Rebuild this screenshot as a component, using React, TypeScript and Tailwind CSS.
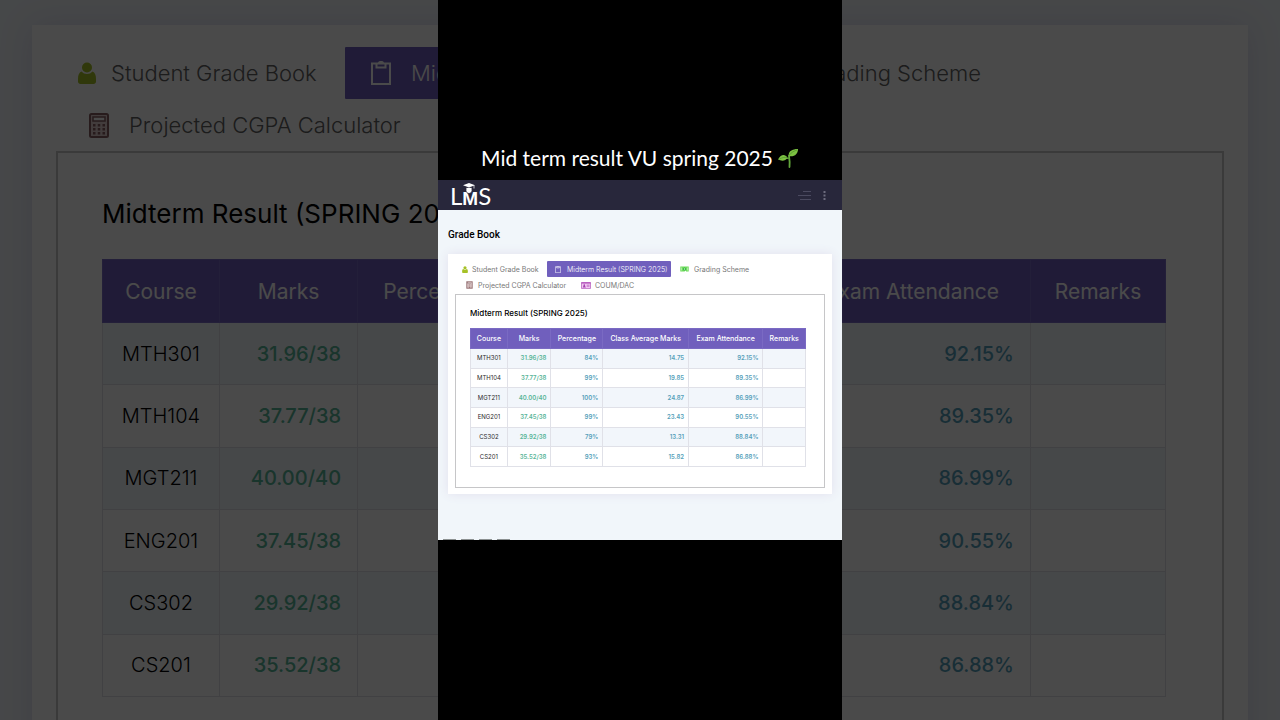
import type { ReactNode } from "react";
import { clsx } from "clsx";

type Size = "sm" | "lg";

type Row = {
  course: string;
  marks: string;
  percentage: string;
  average: string;
  attendance: string;
};

const rows: Row[] = [
  { course: "MTH301", marks: "31.96/38", percentage: "84%", average: "14.75", attendance: "92.15%" },
  { course: "MTH104", marks: "37.77/38", percentage: "99%", average: "19.85", attendance: "89.35%" },
  { course: "MGT211", marks: "40.00/40", percentage: "100%", average: "24.87", attendance: "86.99%" },
  { course: "ENG201", marks: "37.45/38", percentage: "99%", average: "23.43", attendance: "90.55%" },
  { course: "CS302", marks: "29.92/38", percentage: "79%", average: "13.31", attendance: "88.84%" },
  { course: "CS201", marks: "35.52/38", percentage: "93%", average: "15.82", attendance: "86.88%" },
];

const headings = ["Course", "Marks", "Percentage", "Class Average Marks", "Exam Attendance", "Remarks"];

function UserIcon({ className }: { className: string }) {
  return (
    <svg viewBox="0 0 18 22" className={className} aria-hidden="true">
      <circle cx="9" cy="5.5" r="5" fill="#a6c126" />
      <path d="M3.5 9.5C1 10.5 0 13 0 17v2.500C0 21 1 22 2.500 22h13c1.500 0 2.500-1 2.500-2.500V17c0-4-1-6.500-3.500-7.500C13 11.200 11.200 12 9 12s-4-.8-5.500-2.500Z" fill="#a6c126" />
    </svg>
  );
}

function ClipboardIcon({ className }: { className: string }) {
  return (
    <svg viewBox="0 0 20 24" className={className} fill="none" stroke="#fff" strokeWidth="2" aria-hidden="true">
      <path d="M1 2.500h18V23H1z" />
      <path d="M5.500 2.500v4h9v-4" />
      <path d="M8 2C8 .5 12 .5 12 2" />
    </svg>
  );
}

function SchemeIcon({ className }: { className: string }) {
  return (
    <svg viewBox="0 0 28 20" className={className} aria-hidden="true">
      <path d="M0 2h28v16h-9v-2h-4v2H0z" fill="#6fdc5c" />
      <path d="M3 5h2v10H3zM23 5h2v10h-2z" fill="#d8f7d2" />
      <circle cx="14" cy="10" r="5" fill="#35b34a" />
      <path d="M13 7h2v6h-2z" fill="#d8f7d2" />
    </svg>
  );
}

function CalculatorIcon({ className }: { className: string }) {
  return (
    <svg viewBox="0 0 20 25" className={className} aria-hidden="true">
      <rect x="1" y="1" width="18" height="23" rx="1.500" fill="#e2cfcf" stroke="#875f62" strokeWidth="2" />
      <rect x="4" y="4" width="12" height="4" fill="#fff" stroke="#875f62" strokeWidth="1.500" />
      <g fill="#875f62">
        <path d="M4 11h2.500v2.500H4zM8.750 11h2.500v2.500h-2.500zM13.500 11H16v2.500h-2.500z" />
        <path d="M4 15h2.500v2.500H4zM8.750 15h2.500v2.500h-2.500zM13.500 15H16v2.500h-2.500z" />
        <path d="M4 19h2.500v2.500H4zM8.750 19h2.500v2.500h-2.500zM13.500 19H16v2.500h-2.500z" />
      </g>
    </svg>
  );
}

function IdCardIcon({ className }: { className: string }) {
  return (
    <svg viewBox="0 0 28 20" className={className} aria-hidden="true">
      <rect x="1" y="1" width="26" height="18" rx="1.500" fill="#f0c8f1" stroke="#b050b8" strokeWidth="2" />
      <path d="M1 1h26v3.500H1z" fill="#b050b8" />
      <circle cx="9" cy="9" r="2.500" fill="#a43fae" />
      <path d="M4.500 16c0-3 2-4.500 4.500-4.500s4.500 1.500 4.500 4.500z" fill="#a43fae" />
      <path d="M16 8h8v2h-8zM16 12.500h8v2h-8z" fill="#b050b8" />
    </svg>
  );
}

function Tab({ size, active, className, children }: { size: Size; active?: boolean; className: string; children: ReactNode }) {
  return (
    <button
      type="button"
      role="tab"
      aria-selected={!!active}
      className={clsx(
        "flex shrink-0 items-center whitespace-nowrap leading-none",
        size === "lg" ? "h-[52px] text-[22px]" : "h-4 text-[7px]",
        active ? "rounded-[1px] bg-[#705fbd] text-white" : size === "lg" ? "text-[#606060]" : "text-[#777777]",
        size === "sm" && !active ? "font-normal" : "font-light",
        className,
      )}
    >
      {children}
    </button>
  );
}

function Tabs({ size }: { size: Size }) {
  const lg = size === "lg";
  return (
    <div role="tablist" aria-label="Grade book sections" className={lg ? "" : "pb-px"}>
      <div className="flex">
        <Tab size={size} className={lg ? "w-[289px] gap-[15px] pl-[22px]" : "w-[92px] gap-1 pl-[7px]"}>
          <UserIcon className={lg ? "h-[22px] w-[18px]" : "h-[7px] w-[6px]"} />
          Student Grade Book
        </Tab>
        <Tab size={size} active className={lg ? "w-[393px] gap-5 pl-[26px]" : "w-[124px] gap-[6px] pl-2"}>
          <ClipboardIcon className={lg ? "h-6 w-5" : "h-[7px] w-[6px]"} />
          Midterm Result (SPRING 2025)
        </Tab>
        <Tab size={size} className={lg ? "gap-4 pl-7" : "gap-[5px] pl-[9px]"}>
          <SchemeIcon className={lg ? "h-5 w-7" : "h-[6px] w-[9px]"} />
          Grading Scheme
        </Tab>
      </div>
      <div className="flex">
        <Tab size={size} className={lg ? "w-[366px] gap-5 pl-[33px]" : "w-[116px] gap-[5px] pl-[11px]"}>
          <CalculatorIcon className={lg ? "h-[25px] w-5" : "h-2 w-[7px]"} />
          Projected CGPA Calculator
        </Tab>
        {!lg && (
          <Tab size={size} className="gap-1 pl-[10px]">
            <IdCardIcon className="h-[7px] w-[10px]" />
            COUM/DAC
          </Tab>
        )}
      </div>
    </div>
  );
}

function ResultTable({ size }: { size: Size }) {
  const lg = size === "lg";
  const cell = clsx("border border-[#e0e1e8] py-0", lg ? "px-4" : "px-1");
  const number = clsx(cell, "text-right text-[#559fba]", lg ? "font-medium" : "font-semibold");
  return (
    <table
      className={clsx(
        "w-full table-fixed border-collapse leading-none",
        lg ? "h-[438px] text-[20px]" : "h-[139px] text-[6px]",
      )}
    >
      <colgroup>
        <col className="w-[11%]" />
        <col className="w-[13%]" />
        <col className="w-[15.5%]" />
        <col className="w-[25.6%]" />
        <col className="w-[22.2%]" />
        <col className="w-[12.7%]" />
      </colgroup>
      <thead>
        <tr className={clsx("bg-[#705fbd] text-white", lg ? "h-[63px] text-[21px]" : "h-5 text-[7px]")}>
          {headings.map((heading) => (
            <th key={heading} scope="col" className={clsx("whitespace-nowrap border border-[#7a6ac3] p-0", lg ? "font-normal" : "font-medium")}>
              {lg && heading === "Class Average Marks" ? null : heading}
            </th>
          ))}
        </tr>
      </thead>
      <tbody>
        {rows.map((row) => (
          <tr key={row.course} className={clsx("odd:bg-[#f2f6fb]", lg ? "h-[62px]" : "h-[19px]")}>
            <td className={clsx(cell, "text-center", lg ? "font-light text-black" : "font-normal text-[#2b2b2b]")}>{row.course}</td>
            <td className={clsx(cell, "text-right text-[#58b598]", lg ? "font-medium" : "font-semibold")}>{row.marks}</td>
            <td className={number}>{lg ? null : row.percentage}</td>
            <td className={number}>{lg ? null : row.average}</td>
            <td className={number}>{row.attendance}</td>
            <td className={cell} />
          </tr>
        ))}
      </tbody>
    </table>
  );
}

function GradeCard({ size }: { size: Size }) {
  const lg = size === "lg";
  return (
    <section
      className={clsx(
        "bg-white",
        lg ? "mx-8 px-6 pb-6 pt-[22px] shadow-[0_0_32px_#dcdaec]" : "mx-[10px] px-[7px] pb-[6px] pt-[7px] shadow-[0_0_10px_#e2e0ee]",
      )}
    >
      <Tabs size={size} />
      <div className={clsx("border-[#c6c6c8]", lg ? "border-2 pb-16 pl-11 pr-14" : "border pb-5 pl-[14px] pr-[18px]")}>
        <h2
          className={clsx(
            "flex items-center whitespace-nowrap leading-none text-black",
            lg ? "h-[106px] pt-4 text-[26px]" : "h-[33px] pt-[3px] text-[8px] font-medium",
          )}
        >
          Midterm Result (SPRING 2025)
        </h2>
        <ResultTable size={size} />
      </div>
    </section>
  );
}

function Sprout() {
  return (
    <svg viewBox="0 0 22 20" className="h-5 w-[22px]" aria-label="seedling" role="img">
      <path d="M12.500 19C13 14 12.500 11 12 8" fill="none" stroke="#62a63b" strokeWidth="1.800" strokeLinecap="round" />
      <path d="M12 10C10 11 9 10 8 9" fill="none" stroke="#62a63b" strokeWidth="1.200" />
      <path d="M11.500 8C11.500 3 15 1 21 1c0 5-4 8.500-9.500 7Z" fill="#7cc142" />
      <path d="M10.500 9.500C8 6 4 6 1 11.500c4 2 7.500 1.500 9.500-2Z" fill="#7cc142" />
      <path d="M12 7.500c2-3 5-4.500 8-5.500M2.500 11c3-1.500 5-2 7.500-1.500" fill="none" stroke="#4f8f2c" strokeWidth=".7" />
    </svg>
  );
}

function LmsLogo() {
  return (
    <a href="#home" className="relative flex items-baseline pt-1 font-['Lato',sans-serif] leading-6 text-white" aria-label="LMS home">
      <span className="text-[24px]">L</span>
      <span className="font-['Liberation_Sans',sans-serif] text-[19px] font-bold">M</span>
      <span className="text-[24px]">S</span>
      <svg viewBox="0 0 12 12" className="absolute left-[13px] top-[3px] size-3" aria-hidden="true">
        <path d="M3 4.500v3C3 9 4.300 10.500 6 10.500S9 9 9 7.500v-3z" fill="#fff" stroke="#28273b" strokeWidth=".8" />
        <path d="M6 0 12 2.300 6 4.600 0 2.300z" fill="#fff" />
        <path d="M11 2.500v3" stroke="#fff" strokeWidth=".7" />
      </svg>
    </a>
  );
}

function PortalHeader() {
  return (
    <header className="flex h-[30px] items-center justify-between bg-[#28273b] pl-3 pr-4">
      <LmsLogo />
      <div className="flex items-center gap-3">
        <button type="button" aria-label="Open menu">
          <svg viewBox="0 0 13 9" className="h-[9px] w-[13px]" fill="none" stroke="#4b4a60" aria-hidden="true">
            <path d="M5 .5h8M0 4.500h13M2 8.500h11" />
          </svg>
        </button>
        <button type="button" aria-label="More options">
          <svg viewBox="0 0 3 11" className="h-[11px] w-[3px]" fill="#6d6c7e" aria-hidden="true">
            <path d="M.5 1h2v2h-2zM.5 4.500h2v2h-2zM.5 8h2v2h-2z" />
          </svg>
        </button>
      </div>
    </header>
  );
}

export default function App() {
  return (
    <div className="grid h-screen min-h-[540px] grid-cols-1 overflow-hidden bg-black font-['Inter','Noto_Sans',sans-serif]">
      <div aria-hidden="true" inert className="col-start-1 row-start-1 min-w-0 overflow-hidden bg-[#f1f6fa] pt-[25px] opacity-[0.29]">
        <GradeCard size="lg" />
      </div>
      <main className="z-10 col-start-1 row-start-1 mx-auto grid w-full max-w-[404px] grid-rows-[1fr_auto_1fr] bg-black">
        <div className="flex items-end justify-center gap-1 pb-3">
          <h1 className="whitespace-nowrap font-['Lato',sans-serif] text-[21px] leading-5 text-white">Mid term result VU spring 2025</h1>
          <Sprout />
        </div>
        <div className="flex h-[360px] flex-col bg-[#f1f6fa]">
          <PortalHeader />
          <h2 className="flex h-11 items-center pl-[10px] pt-[5px] font-['Roboto',sans-serif] text-[10px] font-medium text-black">Grade Book</h2>
          <GradeCard size="sm" />
          <div className="mt-auto flex gap-[5px] pl-[5px]">
            <span className="h-px w-[13px] bg-[#8b9090]" />
            <span className="h-px w-[13px] bg-[#8b9090]" />
            <span className="h-px w-[13px] bg-[#8b9090]" />
            <span className="h-px w-[13px] bg-[#8b9090]" />
          </div>
        </div>
      </main>
    </div>
  );
}
